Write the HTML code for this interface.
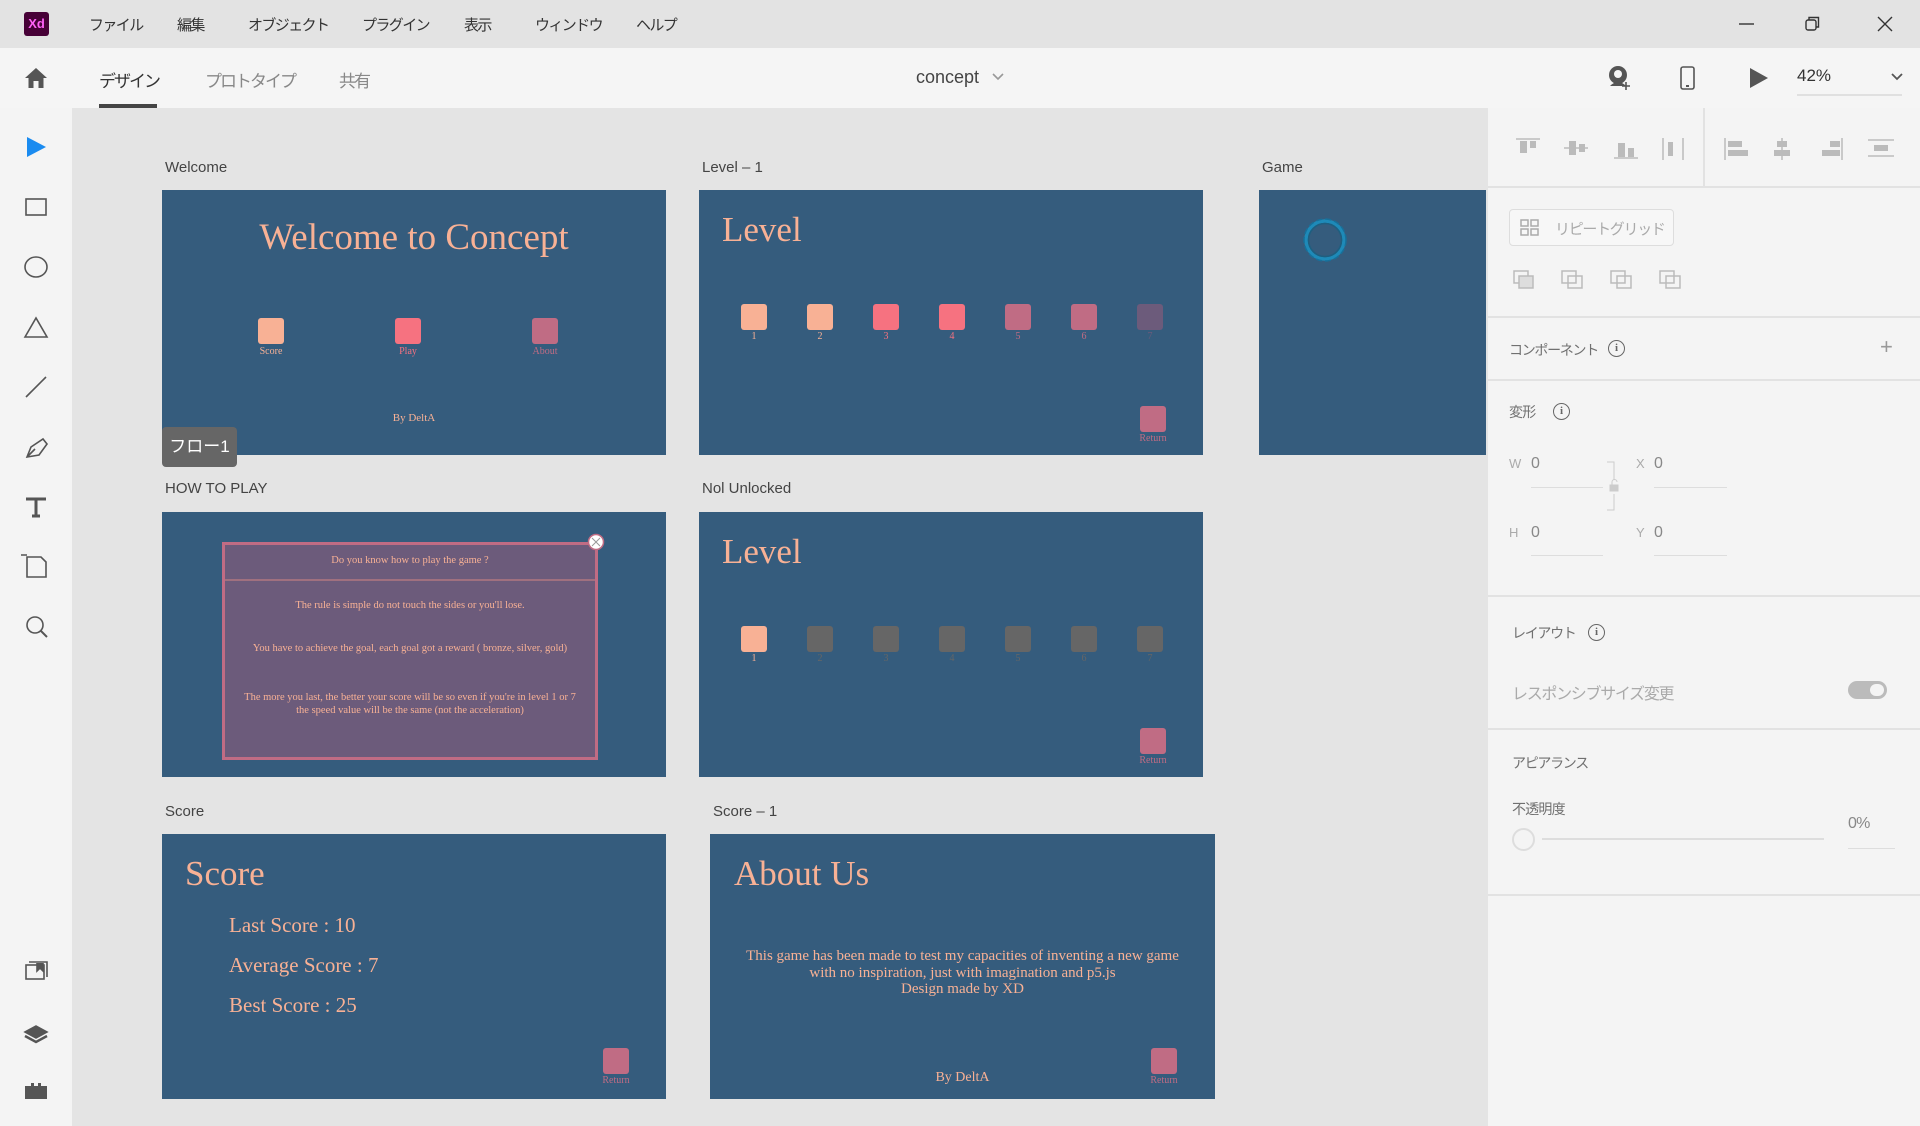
<!DOCTYPE html>
<html><head><meta charset="utf-8">
<style>
*{margin:0;padding:0;box-sizing:border-box}
body{width:1920px;height:1126px;overflow:hidden;background:#e4e4e4;font-family:"Liberation Sans","Noto Sans CJK JP",sans-serif;position:relative;color:#333}
.a{position:absolute}
.title{top:0;left:0;width:1920px;height:48px;background:#e3e3e3}
.menu{top:14px;font-size:15px;color:#333;letter-spacing:-1.6px}
.tb{top:48px;left:0;width:1920px;height:60px;background:#f5f5f5}
.left{top:108px;left:0;width:72px;height:1018px;background:#f4f4f4}
.right{top:108px;left:1488px;width:432px;height:1018px;background:#f4f4f4}
.ab{position:absolute;background:#355c7d;overflow:hidden}
.lbl{position:absolute;font-size:15px;color:#444}
.serif{font-family:"Liberation Serif","DejaVu Serif",serif}
.sq{position:absolute;width:26px;height:26px;border-radius:3px}
.t8{position:absolute;font-size:10px;font-family:"Liberation Serif",serif;text-align:center;width:60px}
.sep{position:absolute;left:1488px;width:432px;height:2px;background:#e2e2e2}
.pl{position:absolute;font-size:14px;color:#707070;letter-spacing:-0.8px}
.info{position:absolute;width:17px;height:17px;border:1.5px solid #666;border-radius:50%;font-size:11px;font-weight:bold;color:#666;text-align:center;line-height:14px;font-family:"Liberation Serif",serif}
.ul{position:absolute;height:1px;background:#ddd}
.tab{position:absolute;top:67px;font-size:17px;letter-spacing:-2px}
</style></head><body>

<div class="a title"></div>
<div class="a" style="left:24px;top:12px;width:25px;height:24px;background:#470137;border-radius:3px;color:#ff61f6;font-size:13px;font-weight:bold;text-align:center;line-height:24px">Xd</div>
<div class="a menu" style="left:89px">ファイル</div>
<div class="a menu" style="left:177px">編集</div>
<div class="a menu" style="left:248px">オブジェクト</div>
<div class="a menu" style="left:362px">プラグイン</div>
<div class="a menu" style="left:464px">表示</div>
<div class="a menu" style="left:535px">ウィンドウ</div>
<div class="a menu" style="left:636px">ヘルプ</div>
<svg class="a" style="left:1730px;top:10px" width="180" height="28" viewBox="0 0 180 28" fill="none" stroke="#333" stroke-width="1.4">
<line x1="9" y1="14" x2="24" y2="14"/>
<rect x="76" y="10" width="10" height="10" rx="2"/><path d="M79 10 V7.5 H88.5 V17 H86"/>
<path d="M148 7 L162 21 M162 7 L148 21"/>
</svg>

<div class="a tb"></div>
<svg class="a" style="left:24px;top:66px" width="24" height="24" viewBox="0 0 24 24"><path d="M12 2 L23 12 H19.5 V22 H14.5 V15 H9.5 V22 H4.5 V12 H1 Z" fill="#555"/></svg>
<div class="tab" style="left:99px;color:#333">デザイン</div>
<div class="a" style="left:99px;top:104px;width:58px;height:4px;background:#444"></div>
<div class="tab" style="left:205px;color:#888">プロトタイプ</div>
<div class="tab" style="left:339px;color:#888">共有</div>
<div class="a" style="left:916px;top:67px;font-size:18px;color:#444">concept</div>
<svg class="a" style="left:991px;top:72px" width="14" height="10"><path d="M2 2 L7 7 L12 2" stroke="#999" stroke-width="1.6" fill="none"/></svg>
<svg class="a" style="left:1606px;top:64px" width="28" height="28" viewBox="0 0 28 28"><circle cx="12" cy="11" r="9" fill="#555"/><path d="M4 22 Q12 14 20 22 Z" fill="#555"/><circle cx="12" cy="10" r="4" fill="#f5f5f5"/><path d="M20 18 V26 M16 22 H24" stroke="#555" stroke-width="1.6"/></svg>
<svg class="a" style="left:1680px;top:66px" width="16" height="25"><rect x="1" y="1" width="13" height="22" rx="2" fill="none" stroke="#555" stroke-width="1.6"/><rect x="6" y="19" width="3" height="2" fill="#555"/></svg>
<svg class="a" style="left:1748px;top:67px" width="22" height="22"><path d="M2 1 L20 11 L2 21 Z" fill="#555"/></svg>
<div class="a" style="left:1797px;top:66px;font-size:17px;color:#333">42%</div>
<div class="a" style="left:1797px;top:94px;width:105px;height:2px;background:#e0e0e0"></div>
<svg class="a" style="left:1890px;top:72px" width="14" height="10"><path d="M2 2 L7 7 L12 2" stroke="#555" stroke-width="1.8" fill="none"/></svg>

<div class="a left"></div>
<svg class="a" style="left:0;top:108px" width="72" height="1018" viewBox="0 108 72 1018" fill="none" stroke="#555" stroke-width="1.6">
<path d="M27 137 L46 147 L27 157 Z" fill="#1a8bf0" stroke="none"/>
<rect x="26" y="199" width="20" height="16"/>
<ellipse cx="36" cy="267" rx="11" ry="10"/>
<path d="M25 337 L36 318 L47 337 Z"/>
<path d="M26 397 L46 377"/>
<path d="M27 457 L31 447 L43 439 L47 444 L39 455 Z M27 457 L35 449"/>
<path d="M26 499 H46 M36 499 V516 M32 516 H40" stroke-width="3"/>
<path d="M27 557 V577 H46 V562 L41 557 Z M21 555 H27"/>
<circle cx="35" cy="625" r="8"/><path d="M41 631 L47 637" stroke-width="2"/>
<rect x="26" y="965" width="18" height="14"/><path d="M29 962 H47 V977"/><path d="M37 963 V971 L40 968 L43 971 V963" fill="#555"/>
<path d="M25 1032 L36 1026 L47 1032 L36 1038 Z" fill="#555"/><path d="M25 1036 L36 1042 L47 1036" stroke-width="2.5"/>
<path d="M25 1086 H31 V1083 H34 V1086 H38 V1083 H41 V1086 H47 V1099 H25 Z" fill="#555" stroke="none"/>
</svg>

<div class="lbl" style="left:165px;top:159px">Welcome</div>
<div class="lbl" style="left:702px;top:159px">Level – 1</div>
<div class="lbl" style="left:1262px;top:159px">Game</div>
<div class="lbl" style="left:165px;top:480px">HOW TO PLAY</div>
<div class="lbl" style="left:702px;top:480px">Nol Unlocked</div>
<div class="lbl" style="left:165px;top:803px">Score</div>
<div class="lbl" style="left:713px;top:803px">Score – 1</div>

<!-- Welcome -->
<div class="ab serif" style="left:162px;top:190px;width:504px;height:265px">
 <div class="a" style="left:0;width:504px;top:26px;text-align:center;font-size:37px;color:#f8b195">Welcome to Concept</div>
 <div class="sq" style="left:96px;top:128px;background:#f8b195"></div>
 <div class="sq" style="left:233px;top:128px;background:#f67280"></div>
 <div class="sq" style="left:370px;top:128px;background:#c06c84"></div>
 <div class="t8" style="left:79px;top:156px;color:#f8b195">Score</div>
 <div class="t8" style="left:216px;top:156px;color:#f67280">Play</div>
 <div class="t8" style="left:353px;top:156px;color:#c06c84">About</div>
 <div class="a" style="left:0;width:504px;top:222px;text-align:center;font-size:11px;color:#f8b195">By DeltA</div>
</div>
<div class="a" style="left:162px;top:427px;width:75px;height:40px;background:#666;border-radius:4px;color:#fff;font-size:17px;line-height:40px;text-align:center">フロー1</div>

<!-- Level -->
<div class="ab serif" style="left:699px;top:190px;width:504px;height:265px">
 <div class="a" style="left:23px;top:20px;font-size:35px;color:#f8b195">Level</div>
 <div class="sq" style="left:42px;top:114px;background:#f8b195"></div>
 <div class="sq" style="left:108px;top:114px;background:#f8b195"></div>
 <div class="sq" style="left:174px;top:114px;background:#f67280"></div>
 <div class="sq" style="left:240px;top:114px;background:#f67280"></div>
 <div class="sq" style="left:306px;top:114px;background:#c06c84"></div>
 <div class="sq" style="left:372px;top:114px;background:#c06c84"></div>
 <div class="sq" style="left:438px;top:114px;background:#6c5b7b"></div>
 <div class="t8" style="left:25px;top:141px;color:#f8b195">1</div>
 <div class="t8" style="left:91px;top:141px;color:#f8b195">2</div>
 <div class="t8" style="left:157px;top:141px;color:#f67280">3</div>
 <div class="t8" style="left:223px;top:141px;color:#f67280">4</div>
 <div class="t8" style="left:289px;top:141px;color:#c06c84">5</div>
 <div class="t8" style="left:355px;top:141px;color:#c06c84">6</div>
 <div class="t8" style="left:421px;top:141px;color:#6c5b7b">7</div>
 <div class="sq" style="left:441px;top:216px;background:#c06c84"></div>
 <div class="t8" style="left:424px;top:243px;color:#c06c84">Return</div>
</div>

<!-- Game -->
<div class="ab" style="left:1259px;top:190px;width:227px;height:265px">
 <svg class="a" style="left:40px;top:24px" width="52" height="52"><circle cx="26" cy="26" r="19" fill="none" stroke="#1e8ab8" stroke-width="3.5"/><circle cx="26" cy="26" r="21" fill="none" stroke="#17709a" stroke-width="1.5" stroke-dasharray="6 3"/><circle cx="26" cy="26" r="16.5" fill="none" stroke="#1d5f80" stroke-width="1.5"/></svg>
</div>

<!-- How to play -->
<div class="ab serif" style="left:162px;top:512px;width:504px;height:265px">
 <div class="a" style="left:60px;top:30px;width:376px;height:218px;background:#6c5b7b;border:3px solid #c06c84">
  <div class="a" style="left:0;top:34px;width:370px;height:2px;background:#a0707f"></div>
  <div class="a" style="left:0;width:370px;top:10px;text-align:center;font-size:10.5px;color:#f8b195">Do you know how to play the game ?</div>
  <div class="a" style="left:0;width:370px;top:55px;text-align:center;font-size:10.5px;color:#f8b195">The rule is simple do not touch the sides or you'll lose.</div>
  <div class="a" style="left:0;width:370px;top:98px;text-align:center;font-size:10.5px;color:#f8b195">You have to achieve the goal, each goal got a reward ( bronze, silver, gold)</div>
  <div class="a" style="left:0;width:370px;top:146px;text-align:center;font-size:10.5px;line-height:13px;color:#f8b195">The more you last, the better your score will be so even if you're in level 1 or 7<br>the speed value will be the same (not the acceleration)</div>
 </div>
 <svg class="a" style="left:425px;top:21px" width="18" height="18"><circle cx="9" cy="9" r="7.5" fill="#fff" stroke="#c06c84" stroke-width="1.5"/><path d="M5 5 L13 13 M13 5 L5 13" stroke="#999" stroke-width="1"/></svg>
</div>

<!-- Nol unlocked -->
<div class="ab serif" style="left:699px;top:512px;width:504px;height:265px">
 <div class="a" style="left:23px;top:20px;font-size:35px;color:#f8b195">Level</div>
 <div class="sq" style="left:42px;top:114px;background:#f8b195"></div>
 <div class="sq" style="left:108px;top:114px;background:#666"></div>
 <div class="sq" style="left:174px;top:114px;background:#666"></div>
 <div class="sq" style="left:240px;top:114px;background:#666"></div>
 <div class="sq" style="left:306px;top:114px;background:#666"></div>
 <div class="sq" style="left:372px;top:114px;background:#666"></div>
 <div class="sq" style="left:438px;top:114px;background:#666"></div>
 <div class="t8" style="left:25px;top:141px;color:#f8b195">1</div>
 <div class="t8" style="left:91px;top:141px;color:#666">2</div>
 <div class="t8" style="left:157px;top:141px;color:#666">3</div>
 <div class="t8" style="left:223px;top:141px;color:#666">4</div>
 <div class="t8" style="left:289px;top:141px;color:#666">5</div>
 <div class="t8" style="left:355px;top:141px;color:#666">6</div>
 <div class="t8" style="left:421px;top:141px;color:#666">7</div>
 <div class="sq" style="left:441px;top:216px;background:#c06c84"></div>
 <div class="t8" style="left:424px;top:243px;color:#c06c84">Return</div>
</div>

<!-- Score -->
<div class="ab serif" style="left:162px;top:834px;width:504px;height:265px">
 <div class="a" style="left:23px;top:20px;font-size:35px;color:#f8b195">Score</div>
 <div class="a" style="left:67px;top:79px;font-size:21px;color:#f8b195">Last Score : 10</div>
 <div class="a" style="left:67px;top:119px;font-size:21px;color:#f8b195">Average Score : 7</div>
 <div class="a" style="left:67px;top:159px;font-size:21px;color:#f8b195">Best Score : 25</div>
 <div class="sq" style="left:441px;top:214px;background:#c06c84"></div>
 <div class="t8" style="left:424px;top:241px;color:#c06c84">Return</div>
</div>

<!-- About -->
<div class="ab serif" style="left:710px;top:834px;width:505px;height:265px">
 <div class="a" style="left:24px;top:20px;font-size:35px;color:#f8b195">About Us</div>
 <div class="a" style="left:0;width:505px;top:114px;text-align:center;font-size:15px;line-height:16.5px;color:#f8b195">This game has been made to test my capacities of inventing a new game<br>with no inspiration, just with imagination and p5.js<br>Design made by XD</div>
 <div class="a" style="left:0;width:505px;top:236px;text-align:center;font-size:14px;color:#f8b195">By DeltA</div>
 <div class="sq" style="left:441px;top:214px;background:#c06c84"></div>
 <div class="t8" style="left:424px;top:241px;color:#c06c84">Return</div>
</div>

<!-- Right panel -->
<div class="a right"></div>
<div class="a" style="left:1703px;top:108px;width:2px;height:79px;background:#e2e2e2"></div>
<svg class="a" style="left:1488px;top:120px" width="432" height="180" fill="#bbb" stroke="#bbb">
<g stroke-width="1.5">
<line x1="28" y1="19" x2="52" y2="19"/><rect x="32" y="21" width="7" height="12" stroke="none"/><rect x="42" y="21" width="6" height="7" stroke="none"/>
<line x1="76" y1="28" x2="100" y2="28"/><rect x="81" y="21" width="7" height="14" stroke="none"/><rect x="91" y="24" width="6" height="8" stroke="none"/>
<line x1="126" y1="38" x2="150" y2="38"/><rect x="130" y="23" width="7" height="14" stroke="none"/><rect x="140" y="28" width="6" height="9" stroke="none"/>
<line x1="175" y1="18" x2="175" y2="40"/><line x1="195" y1="18" x2="195" y2="40"/><rect x="180" y="22" width="5" height="14" stroke="none"/>
<line x1="237" y1="18" x2="237" y2="40"/><rect x="240" y="21" width="14" height="6" stroke="none"/><rect x="240" y="30" width="20" height="6" stroke="none"/>
<line x1="294" y1="18" x2="294" y2="40"/><rect x="289" y="21" width="10" height="6" stroke="none"/><rect x="286" y="30" width="16" height="6" stroke="none"/>
<line x1="354" y1="18" x2="354" y2="40"/><rect x="342" y="21" width="10" height="6" stroke="none"/><rect x="334" y="30" width="18" height="6" stroke="none"/>
<line x1="380" y1="20" x2="406" y2="20"/><line x1="380" y1="36" x2="406" y2="36"/><rect x="386" y="25" width="14" height="6" stroke="none"/>
</g>
<g fill="none" stroke-width="1.5">
<rect x="26" y="151" width="14" height="12"/><rect x="31" y="156" width="14" height="12" fill="#ddd"/>
<rect x="74" y="151" width="14" height="12"/><rect x="80" y="156" width="14" height="12"/>
<rect x="123" y="151" width="14" height="12"/><rect x="129" y="156" width="14" height="12"/>
<rect x="172" y="151" width="14" height="12"/><rect x="178" y="156" width="14" height="12"/>
</g>
</svg>
<div class="sep" style="top:186px"></div>
<div class="a" style="left:1509px;top:209px;width:165px;height:37px;border:1.5px solid #ddd;border-radius:4px;background:#f7f7f7"></div>
<svg class="a" style="left:1520px;top:219px" width="20" height="18" fill="none" stroke="#aaa" stroke-width="1.5"><rect x="1" y="1" width="7" height="6"/><rect x="11" y="1" width="7" height="6"/><rect x="1" y="10" width="7" height="6"/><rect x="11" y="10" width="7" height="6"/></svg>
<div class="pl" style="left:1555px;top:218px;font-size:15px;color:#aaa;letter-spacing:-1.3px">リピートグリッド</div>
<div class="sep" style="top:316px"></div>
<div class="pl" style="left:1509px;top:340px;letter-spacing:-1.3px">コンポーネント</div>
<div class="info" style="left:1608px;top:340px">i</div>
<div class="pl" style="left:1880px;top:334px;font-size:22px;color:#999">+</div>
<div class="sep" style="top:379px"></div>
<div class="pl" style="left:1509px;top:402px">変形</div>
<div class="info" style="left:1553px;top:403px">i</div>
<div class="pl" style="left:1509px;top:456px;color:#aaa;font-size:13px">W</div>
<div class="pl" style="left:1531px;top:455px;font-size:16px;color:#888">0</div>
<div class="ul" style="left:1531px;top:487px;width:72px"></div>
<div class="pl" style="left:1636px;top:456px;color:#aaa;font-size:13px">X</div>
<div class="pl" style="left:1654px;top:455px;font-size:16px;color:#888">0</div>
<div class="ul" style="left:1654px;top:487px;width:73px"></div>
<div class="pl" style="left:1509px;top:525px;color:#aaa;font-size:13px">H</div>
<div class="pl" style="left:1531px;top:524px;font-size:16px;color:#888">0</div>
<div class="ul" style="left:1531px;top:555px;width:72px"></div>
<div class="pl" style="left:1636px;top:525px;color:#aaa;font-size:13px">Y</div>
<div class="pl" style="left:1654px;top:524px;font-size:16px;color:#888">0</div>
<div class="ul" style="left:1654px;top:555px;width:73px"></div>
<svg class="a" style="left:1605px;top:460px" width="20" height="52" fill="none" stroke="#ccc" stroke-width="1"><path d="M2 2 H9 V20 M2 50 H9 V34"/><rect x="5" y="25" width="8" height="6" fill="#ccc"/><path d="M7 25 V22 A2.5 2.5 0 0 1 12 22"/></svg>
<div class="sep" style="top:595px"></div>
<div class="pl" style="left:1512px;top:623px;letter-spacing:-1.3px">レイアウト</div>
<div class="info" style="left:1588px;top:624px">i</div>
<div class="pl" style="left:1512px;top:680px;font-size:16px;color:#aaa;letter-spacing:-1.3px">レスポンシブサイズ変更</div>
<div class="a" style="left:1848px;top:681px;width:39px;height:18px;border-radius:9px;background:#bbb"></div>
<div class="a" style="left:1870px;top:684px;width:14px;height:12px;border-radius:6px;background:#f4f4f4"></div>
<div class="sep" style="top:728px"></div>
<div class="pl" style="left:1512px;top:753px;letter-spacing:-1.3px">アピアランス</div>
<div class="pl" style="left:1512px;top:799px">不透明度</div>
<div class="a" style="left:1512px;top:828px;width:23px;height:23px;border-radius:50%;border:2px solid #ddd;background:#f4f4f4"></div>
<div class="a" style="left:1542px;top:838px;width:282px;height:2px;background:#ddd"></div>
<div class="pl" style="left:1848px;top:815px;font-size:16px;color:#888">0%</div>
<div class="ul" style="left:1848px;top:848px;width:47px"></div>
<div class="sep" style="top:894px"></div>
</body></html>
